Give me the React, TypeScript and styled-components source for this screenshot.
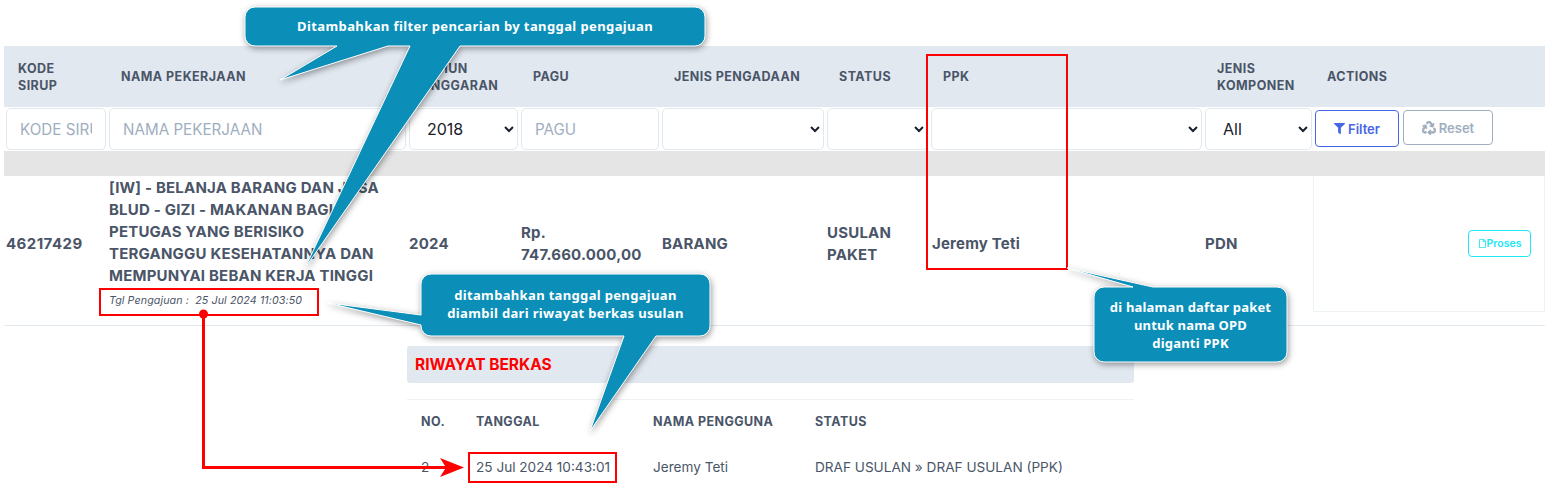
import styled, { createGlobalStyle } from "styled-components";
import { FaFilter, FaRecycle, FaRegFile } from "react-icons/fa";

const GRID = "103px 300px 112px 141px 165px 104px 274px 110px 232px";

const GlobalStyle = createGlobalStyle`
  html, body {
    margin: 0;
    padding: 0;
    background: #fff;
    font-family: Inter, "Liberation Sans", sans-serif;
  }
  * { box-sizing: border-box; }
`;

const Page = styled.div`
  position: relative;
  width: 1547px;
  height: 489px;
  overflow: hidden;
  padding: 46px 2px 0 4px;
`;

const Row = styled.div`
  display: grid;
  grid-template-columns: ${GRID};
`;

const HeadRow = styled(Row)`
  height: 61px;
  background: #e2e8f0;
  align-items: center;
`;

const HeadCell = styled.div`
  padding: 0 14px;
  color: #4a5568;
  font-size: 12.5px;
  font-weight: 700;
  line-height: 17px;
  letter-spacing: 0.45px;
`;

const FilterRow = styled(Row)`
  height: 44px;
  padding-top: 1px;
`;

const FilterCell = styled.div`
  padding: 0 1px 0 2px;
  height: 42px;
`;

const TextInput = styled.input`
  width: 100%;
  height: 100%;
  padding: 0 13px;
  border: 1px solid #e2e8f0;
  border-radius: 5px;
  background: #fff;
  font-family: inherit;
  font-size: 15.2px;
  color: #1a202c;
  outline: none;
  &::placeholder { color: #a0aec0; opacity: 1; }
`;

const Select = styled.select`
  width: 100%;
  height: 100%;
  padding: 0 0 0 13px;
  border: 1px solid #e2e8f0;
  border-radius: 5px;
  background: #fff;
  font-family: inherit;
  font-size: 16px;
  color: #1a202c;
  outline: none;
`;

const ButtonCell = styled.div`
  display: flex;
  align-items: flex-start;
  gap: 4px;
  padding: 2px 0 0 2px;
`;

const ActionButton = styled.button<{ $tone: string; $w: number; $h: number }>`
  display: flex;
  align-items: center;
  justify-content: center;
  gap: 3px;
  width: ${(p) => p.$w}px;
  height: ${(p) => p.$h}px;
  border: 1px solid ${(p) => p.$tone};
  border-radius: 4px;
  background: #fff;
  color: ${(p) => p.$tone};
  font-family: inherit;
  font-size: 13px;
  font-weight: 600;
  padding: 0;
`;

const RecycleIcon = styled(FaRecycle)`
  stroke: currentColor;
  stroke-width: 24px;
`;

const GrayBand = styled.div`
  height: 25px;
  background: #e5e5e5;
`;

const DataRow = styled(Row)`
  height: 150px;
  padding-bottom: 14px;
  border-bottom: 1px solid #e2e8f0;
  align-items: center;
`;

const DataCell = styled.div<{ $pad?: number }>`
  padding-left: ${(p) => p.$pad ?? 2}px;
  color: #4a5568;
  font-size: 15px;
  font-weight: 700;
  line-height: 22px;
  letter-spacing: 0.2px;
`;

const CodeCell = styled(DataCell)`
  letter-spacing: 0.45px;
`;

const NameCell = styled(DataCell)`
  align-self: start;
  padding: 1px 14px 0 2px;
`;

const SubmitDate = styled.div`
  margin-top: 3px;
  font-size: 10.7px;
  font-style: italic;
  font-weight: 400;
  letter-spacing: 0.1px;
  color: #4a5568;
`;

const ActionBox = styled.div`
  align-self: stretch;
  display: flex;
  align-items: center;
  justify-content: flex-end;
  padding-right: 13px;
  border: 1px solid #edf2f7;
  border-top: 0;
`;

const ProcessButton = styled.button`
  display: flex;
  align-items: center;
  justify-content: center;
  width: 63px;
  height: 27px;
  padding: 0;
  border: 1px solid #21e6f5;
  border-radius: 4px;
  background: #fff;
  color: #21e6f5;
  font-family: inherit;
  font-size: 10.5px;
  font-weight: 600;
`;

const History = styled.section`
  width: 727px;
  margin: 20px 0 0 403px;
`;

const HistoryTitle = styled.div`
  height: 37px;
  padding-left: 8px;
  display: flex;
  align-items: center;
  background: #e2e8f0;
  border-radius: 3px;
  color: #f00;
  font-size: 15.5px;
  font-weight: 700;
`;

const HistoryRow = styled.div`
  display: grid;
  grid-template-columns: 55px 177px 162px 1fr;
  padding-left: 14px;
  align-items: center;
`;

const HistoryHead = styled(HistoryRow)`
  height: 43px;
  margin-top: 16px;
  border-top: 1px solid #edf2f7;
  color: #4a5568;
  font-size: 12.5px;
  font-weight: 700;
  letter-spacing: 0.42px;
`;

const HistoryBody = styled(HistoryRow)`
  height: 50px;
  color: #4a5568;
  font-size: 13.6px;
`;

const Overlay = styled.svg`
  position: absolute;
  inset: 0;
  pointer-events: none;
`;

const CalloutShape = styled.path`
  fill: #0b8fb9;
  stroke: #fff;
  stroke-width: 1;
  filter: drop-shadow(1px 2px 3px rgba(0, 0, 0, 0.4));
`;

const CalloutText = styled.div<{ $x: number; $y: number; $w: number; $h: number; $spacing: number }>`
  position: absolute;
  left: ${(p) => p.$x}px;
  top: ${(p) => p.$y}px;
  width: ${(p) => p.$w}px;
  height: ${(p) => p.$h}px;
  display: flex;
  align-items: center;
  justify-content: center;
  text-align: center;
  color: #fff;
  font-family: "Noto Sans", sans-serif;
  font-size: 13px;
  font-weight: 700;
  line-height: 18px;
  letter-spacing: ${(p) => p.$spacing}px;
`;

const heads = [
  "KODE SIRUP",
  "NAMA PEKERJAAN",
  "TAHUN ANGGARAN",
  "PAGU",
  "JENIS PENGADAAN",
  "STATUS",
  "PPK",
  "JENIS KOMPONEN",
  "ACTIONS",
];

const App = () => {
  return (
    <Page>
      <GlobalStyle />
      <HeadRow>
        {heads.map((h) => (
          <HeadCell key={h}>{h}</HeadCell>
        ))}
      </HeadRow>
      <FilterRow>
        <FilterCell><TextInput placeholder="KODE SIRUP" /></FilterCell>
        <FilterCell><TextInput placeholder="NAMA PEKERJAAN" /></FilterCell>
        <FilterCell>
          <Select defaultValue="2018"><option>2018</option></Select>
        </FilterCell>
        <FilterCell><TextInput placeholder="PAGU" /></FilterCell>
        <FilterCell><Select><option></option></Select></FilterCell>
        <FilterCell><Select><option></option></Select></FilterCell>
        <FilterCell><Select><option></option></Select></FilterCell>
        <FilterCell>
          <Select defaultValue="All"><option>All</option></Select>
        </FilterCell>
        <ButtonCell>
          <ActionButton $tone="#4666e8" $w={84} $h={37}>
            <FaFilter size={11} /> Filter
          </ActionButton>
          <ActionButton $tone="#a0aec0" $w={90} $h={35}>
            <RecycleIcon size={14} /> Reset
          </ActionButton>
        </ButtonCell>
      </FilterRow>
      <GrayBand />
      <DataRow>
        <CodeCell>46217429</CodeCell>
        <NameCell>
          [IW] - BELANJA BARANG DAN JASA BLUD - GIZI - MAKANAN BAGI PETUGAS YANG BERISIKO TERGANGGU KESEHATANNYA DAN MEMPUNYAI BEBAN KERJA TINGGI
          <SubmitDate>Tgl Pengajuan :&nbsp; 25 Jul 2024 11:03:50</SubmitDate>
        </NameCell>
        <DataCell>2024</DataCell>
        <DataCell>Rp. 747.660.000,00</DataCell>
        <DataCell>BARANG</DataCell>
        <DataCell>USULAN PAKET</DataCell>
        <DataCell $pad={3}>Jeremy Teti</DataCell>
        <DataCell>PDN</DataCell>
        <ActionBox>
          <ProcessButton>
            <FaRegFile size={9} />
            Proses
          </ProcessButton>
        </ActionBox>
      </DataRow>
      <History>
        <HistoryTitle>RIWAYAT BERKAS</HistoryTitle>
        <HistoryHead>
          <div>NO.</div>
          <div>TANGGAL</div>
          <div>NAMA PENGGUNA</div>
          <div>STATUS</div>
        </HistoryHead>
        <HistoryBody>
          <div>2</div>
          <div>25 Jul 2024 10:43:01</div>
          <div>Jeremy Teti</div>
          <div>DRAF USULAN » DRAF USULAN (PPK)</div>
        </HistoryBody>
      </History>

      <Overlay width="1547" height="489" viewBox="0 0 1547 489">
        <g fill="none" stroke="#f00" strokeWidth="2">
          <rect x="927" y="55" width="140" height="214" />
          <rect x="100" y="289" width="218" height="26" />
          <rect x="469" y="453" width="147" height="29" />
          <path d="M203.500 314V467.500H450" strokeWidth="3" />
        </g>
        <circle cx="203.500" cy="314" r="4.500" fill="#f00" />
        <path d="M464 467.500L440 458L446 467.500L440 477Z" fill="#f00" />
        <CalloutShape d="M255 7H695a10 10 0 0 1 10 10V36a10 10 0 0 1-10 10H460L305 268L410 46H388L280 80L337 46H255a10 10 0 0 1-10-10V17a10 10 0 0 1 10-10Z" />
        <CalloutShape d="M431 274H700a10 10 0 0 1 10 10V326a10 10 0 0 1-10 10H656L590 431L624 336H431a10 10 0 0 1-10-10V325L328 303L421 315V284a10 10 0 0 1 10-10Z" />
        <CalloutShape d="M1104 287H1133L1067 268L1153 287H1277a10 10 0 0 1 10 10V352a10 10 0 0 1-10 10H1104a10 10 0 0 1-10-10V297a10 10 0 0 1 10-10Z" />
      </Overlay>
      <CalloutText $x={245} $y={7} $w={460} $h={38} $spacing={0.4}>
        Ditambahkan filter pencarian by tanggal pengajuan
      </CalloutText>
      <CalloutText $x={421} $y={274} $w={289} $h={59} $spacing={0.34}>
        ditambahkan tanggal pengajuan<br />diambil dari riwayat berkas usulan
      </CalloutText>
      <CalloutText $x={1094} $y={287} $w={193} $h={75} $spacing={0.2}>
        di halaman daftar paket<br />untuk nama OPD<br />diganti PPK
      </CalloutText>
    </Page>
  );
};

export default App;
